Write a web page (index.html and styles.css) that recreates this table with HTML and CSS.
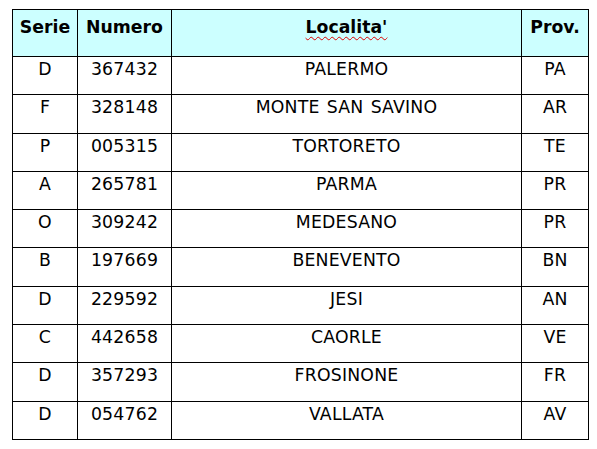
FILE: index.html
```html
<!DOCTYPE html>
<html lang="it">
<head>
<meta charset="utf-8">
<title>Tabella</title>
<link rel="stylesheet" href="styles.css">
</head>
<body>
<table class="tbl">
  <colgroup>
    <col class="c-serie">
    <col class="c-num">
    <col class="c-loc">
    <col class="c-prov">
  </colgroup>
  <thead>
    <tr class="head">
      <th>Serie</th>
      <th>Numero</th>
      <th><span class="spell">Localita'</span></th>
      <th>Prov.</th>
    </tr>
  </thead>
  <tbody>
    <tr><td>D</td><td>367432</td><td>PALERMO</td><td>PA</td></tr>
    <tr><td>F</td><td>328148</td><td>MONTE SAN SAVINO</td><td>AR</td></tr>
    <tr><td>P</td><td>005315</td><td>TORTORETO</td><td>TE</td></tr>
    <tr><td>A</td><td>265781</td><td>PARMA</td><td>PR</td></tr>
    <tr><td>O</td><td>309242</td><td>MEDESANO</td><td>PR</td></tr>
    <tr><td>B</td><td>197669</td><td>BENEVENTO</td><td>BN</td></tr>
    <tr><td>D</td><td>229592</td><td>JESI</td><td>AN</td></tr>
    <tr><td>C</td><td>442658</td><td>CAORLE</td><td>VE</td></tr>
    <tr><td>D</td><td>357293</td><td>FROSINONE</td><td>FR</td></tr>
    <tr><td>D</td><td>054762</td><td>VALLATA</td><td>AV</td></tr>
  </tbody>
</table>
</body>
</html>
```
FILE: styles.css
```css
html, body {
  margin: 0;
  padding: 0;
  background: #ffffff;
}
body {
  padding: 9px 0 0 12px;
  font-family: "DejaVu Sans", Verdana, sans-serif;
  color: #000;
}
.tbl {
  border-collapse: collapse;
  table-layout: fixed;
  width: 576px;
  font-size: 17.3px;
}
.c-serie { width: 65px; }
.c-num { width: 94px; }
.c-loc { width: 350px; }
.c-prov { width: 67px; }
.tbl th, .tbl td {
  border: 1px solid #000;
  text-align: center;
  vertical-align: top;
  padding: 0;
  line-height: 20px;
}
.tbl th {
  background: #ccffff;
  font-weight: bold;
  height: 47px;
  padding-top: 7px;
  box-sizing: border-box;
}
.tbl td {
  height: 38.3px;
  padding-top: 2px;
  box-sizing: border-box;
  letter-spacing: 0.2px;
  word-spacing: 1.5px;
}
.spell {
  text-decoration: underline wavy #e00000;
  text-decoration-thickness: 1px;
  text-underline-offset: 3px;
}
```
